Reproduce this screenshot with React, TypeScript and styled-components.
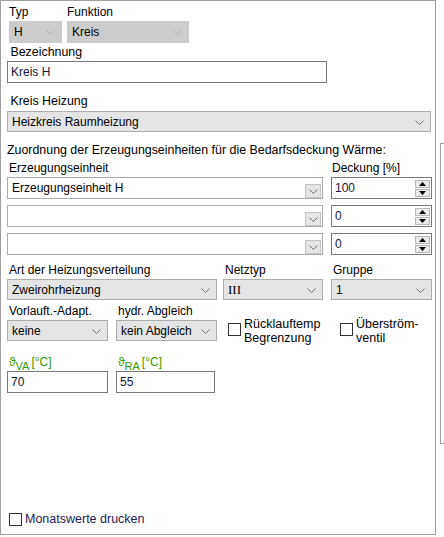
import React from "react";
import styled, { createGlobalStyle, css } from "styled-components";

const GlobalStyle = createGlobalStyle`
  html, body {
    margin: 0;
    padding: 0;
    background: #ffffff;
  }
  body {
    font-family: "Liberation Sans", Arial, sans-serif;
    font-size: 12px;
    color: #000000;
  }
`;

const Page = styled.div`
  display: flex;
  align-items: flex-start;
  gap: 4px;
  width: 444px;
  height: 537px;
  overflow: hidden;
`;

const Panel = styled.div`
  box-sizing: border-box;
  width: 437px;
  height: 535px;
  border: 1px solid #a0a0a0;
  padding: 4px 0 0 6px;
  display: flex;
  flex-direction: column;
`;

const Sliver = styled.div`
  margin-top: 143px;
  width: 3px;
  height: 299px;
  border-left: 1px solid #a0a0a0;
  border-top: 1px solid #a0a0a0;
  border-bottom: 1px solid #a0a0a0;
`;

const Row = styled.div<{ $top?: number; $gap?: number; $indent?: number }>`
  display: flex;
  align-items: flex-start;
  gap: ${(p) => p.$gap ?? 8}px;
  margin-top: ${(p) => p.$top ?? 0}px;
  padding-left: ${(p) => p.$indent ?? 0}px;
`;

const Field = styled.div<{ $w: number }>`
  display: flex;
  flex-direction: column;
  width: ${(p) => p.$w}px;
  flex-shrink: 0;
`;

const Label = styled.div<{ $pad?: number }>`
  height: 14px;
  line-height: 14px;
  padding-left: ${(p) => p.$pad ?? 2}px;
  margin-bottom: 2px;
  white-space: nowrap;
`;

const Heading = styled.div<{ $top: number }>`
  height: 14px;
  line-height: 14px;
  margin-top: ${(p) => p.$top}px;
  white-space: nowrap;
  font-size: 12.4px;
`;

type Kind = "disabled" | "combo" | "edit";

const SelectBox = styled.div<{ $kind: Kind; $h?: number }>`
  box-sizing: border-box;
  position: relative;
  height: ${(p) => p.$h ?? 22}px;
  display: flex;
  align-items: center;
  padding-left: 4px;
  white-space: nowrap;
  ${(p) =>
    p.$kind === "disabled"
      ? css`
          background: #cccccc;
          border: 1px solid #cccccc;
        `
      : p.$kind === "combo"
      ? css`
          background: #e5e5e5;
          border: 1px solid #adadad;
        `
      : css`
          background: #ffffff;
          border: 1px solid #ababab;
        `}
`;

const Chevron = styled.svg`
  position: absolute;
  right: 6px;
  top: 50%;
  margin-top: -2px;
`;

const DropButton = styled.div`
  position: absolute;
  right: 1px;
  top: 6px;
  box-sizing: border-box;
  width: 16px;
  height: 14px;
  background: #e6e6e6;
  border: 1px solid #c4c4c4;
  display: flex;
  align-items: center;
  justify-content: center;
`;

const SerifText = styled.span`
  font-family: "Liberation Serif", "Times New Roman", serif;
  font-size: 13px;
`;

const ChevronPath = ({ color }: { color: string }) => (
  <path d="M0.5 0.5 L4.5 4.5 L8.5 0.5" fill="none" stroke={color} strokeWidth="1" />
);

const Select = ({
  kind,
  children,
  h,
}: {
  kind: Kind;
  children?: React.ReactNode;
  h?: number;
}) => (
  <SelectBox $kind={kind} $h={h}>
    {children}
    {kind === "edit" ? (
      <DropButton>
        <svg width="9" height="5" viewBox="0 0 9 5">
          <ChevronPath color="#707070" />
        </svg>
      </DropButton>
    ) : (
      <Chevron width="9" height="5" viewBox="0 0 9 5">
        <ChevronPath color={kind === "disabled" ? "#a8a8a8" : "#707070"} />
      </Chevron>
    )}
  </SelectBox>
);

const TextBox = styled.div<{ $w: number; $h?: number }>`
  box-sizing: border-box;
  width: ${(p) => p.$w}px;
  height: ${(p) => p.$h ?? 22}px;
  border: 1px solid #7a7a7a;
  background: #ffffff;
  display: flex;
  align-items: center;
  padding-left: 3px;
  position: relative;
  color: #14143c;
`;

const SpinStack = styled.div`
  position: absolute;
  right: 1px;
  top: 2px;
  display: flex;
  flex-direction: column;
  gap: 1px;
`;

const SpinButton = styled.div`
  box-sizing: border-box;
  width: 15px;
  height: 8px;
  background: #eaeaea;
  border: 1px solid #b8b8b8;
  display: flex;
  align-items: center;
  justify-content: center;
`;

const Spin = ({ value }: { value: string }) => (
  <TextBox $w={101} $h={22}>
    {value}
    <SpinStack>
      <SpinButton>
        <svg width="7" height="4" viewBox="0 0 7 4">
          <path d="M0 4 L3.5 0 L7 4 Z" fill="#000" />
        </svg>
      </SpinButton>
      <SpinButton>
        <svg width="7" height="4" viewBox="0 0 7 4">
          <path d="M0 0 L3.5 4 L7 0 Z" fill="#000" />
        </svg>
      </SpinButton>
    </SpinStack>
  </TextBox>
);

const Check = styled.div<{ $drop?: number }>`
  box-sizing: border-box;
  width: 13px;
  height: 13px;
  margin-top: ${(p) => p.$drop ?? 0}px;
  border: 1px solid #333333;
  background: #ffffff;
  flex-shrink: 0;
`;

const CheckItem = styled.div<{ $w: number; $left?: number }>`
  display: flex;
  align-items: flex-start;
  gap: 3px;
  width: ${(p) => p.$w}px;
  margin-top: 13px;
  margin-left: ${(p) => p.$left ?? 0}px;
`;

const CheckText = styled.div`
  line-height: 14px;
  font-size: 12.5px;
`;

const TempLabel = styled.div`
  height: 16px;
  padding-left: 2px;
  color: #339900;
  font-size: 12px;
  white-space: nowrap;
  display: flex;
  align-items: flex-start;
  line-height: 14px;
`;

const Sub = styled.span`
  position: relative;
  top: 4px;
  font-size: 11px;
  margin-right: 2px;
`;

const Spacer = styled.div`
  flex: 1;
`;

const Footer = styled.div`
  display: flex;
  align-items: center;
  gap: 3px;
  padding-left: 2px;
  margin-bottom: 8px;
  color: #1c1c58;
  font-size: 12.5px;
`;

export default function App() {
  return (
    <>
      <GlobalStyle />
      <Page>
        <Panel>
          <Row $gap={5} $indent={2}>
            <Field $w={53}>
              <Label $pad={0}>Typ</Label>
              <Select kind="disabled">H</Select>
            </Field>
            <Field $w={122}>
              <Label $pad={0}>Funktion</Label>
              <Select kind="disabled">Kreis</Select>
            </Field>
          </Row>

          <Heading $top={2}>&nbsp;Bezeichnung</Heading>
          <TextBox $w={320} $h={22} style={{ marginTop: 2 }}>
            Kreis H
          </TextBox>

          <Heading $top={11}>&nbsp;Kreis Heizung</Heading>
          <div style={{ width: 424, marginTop: 3 }}>
            <Select kind="combo" h={21}>
              Heizkreis Raumheizung
            </Select>
          </div>

          <Heading $top={11}>Zuordnung der Erzeugungseinheiten für die Bedarfsdeckung Wärme:</Heading>

          <Row $top={4} $gap={8}>
            <Field $w={316}>
              <Label>Erzeugungseinheit</Label>
              <Select kind="edit">Erzeugungseinheit H</Select>
            </Field>
            <Field $w={101}>
              <Label $pad={1}>Deckung [%]</Label>
              <Spin value="100" />
            </Field>
          </Row>
          <Row $top={6} $gap={8}>
            <Field $w={316}>
              <Select kind="edit" />
            </Field>
            <Spin value="0" />
          </Row>
          <Row $top={6} $gap={8}>
            <Field $w={316}>
              <Select kind="edit" />
            </Field>
            <Spin value="0" />
          </Row>

          <Row $top={8} $gap={6}>
            <Field $w={210}>
              <Label>Art der Heizungsverteilung</Label>
              <Select kind="combo" h={21}>
                Zweirohrheizung
              </Select>
            </Field>
            <Field $w={100}>
              <Label>Netztyp</Label>
              <Select kind="combo" h={21}>
                <SerifText>III</SerifText>
              </Select>
            </Field>
            <Field $w={101} style={{ marginLeft: 2 }}>
              <Label>Gruppe</Label>
              <Select kind="combo" h={21}>
                1
              </Select>
            </Field>
          </Row>

          <Row $top={4} $gap={8} style={{ height: 38 }}>
            <Field $w={101}>
              <Label>Vorlauft.-Adapt.</Label>
              <Select kind="combo" h={21}>
                keine
              </Select>
            </Field>
            <Field $w={101}>
              <Label>hydr. Abgleich</Label>
              <Select kind="combo" h={21}>
                kein Abgleich
              </Select>
            </Field>
            <CheckItem $w={104} $left={3}>
              <Check $drop={6} />
              <CheckText>
                Rücklauftemp
                <br />
                Begrenzung
              </CheckText>
            </CheckItem>
            <CheckItem $w={90}>
              <Check $drop={6} />
              <CheckText>
                Überström-
                <br />
                ventil
              </CheckText>
            </CheckItem>
          </Row>

          <Row $top={13} $gap={8}>
            <Field $w={101}>
              <TempLabel>
                ϑ<Sub>VA</Sub>[°C]
              </TempLabel>
              <TextBox $w={101} $h={22}>70</TextBox>
            </Field>
            <Field $w={99}>
              <TempLabel>
                ϑ<Sub>RA</Sub>[°C]
              </TempLabel>
              <TextBox $w={99} $h={22}>55</TextBox>
            </Field>
          </Row>

          <Spacer />
          <Footer>
            <Check />
            Monatswerte drucken
          </Footer>
        </Panel>
        <Sliver />
      </Page>
    </>
  );
}
